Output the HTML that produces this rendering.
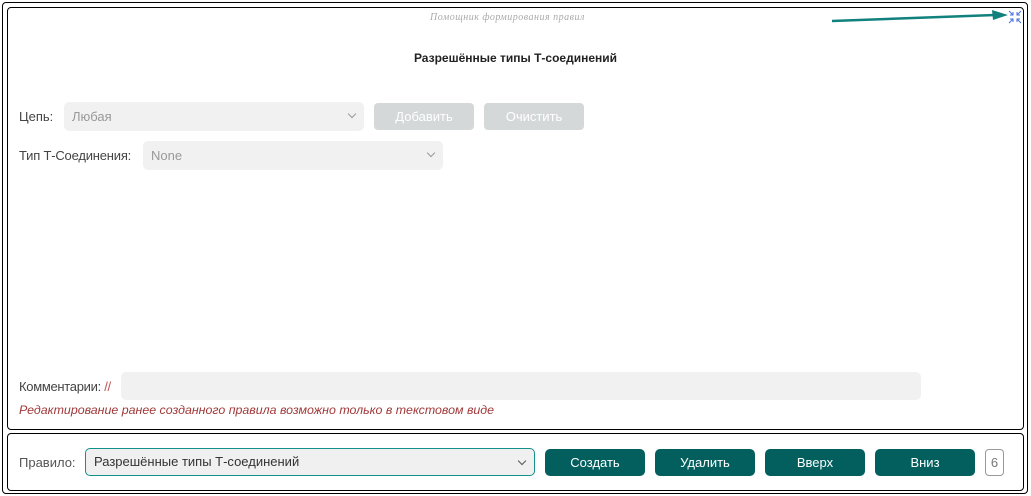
<!DOCTYPE html>
<html><head><meta charset="utf-8"><style>
body{margin:0;width:1031px;height:496px;background:#fff;font-family:"Liberation Sans",sans-serif;position:relative;overflow:hidden;color:#333}
.outer{position:absolute;left:2px;top:2px;width:1024px;height:490px;border:1px solid #000;border-radius:4px}
.p1{position:absolute;left:7px;top:7px;width:1015px;height:421px;border:1.5px solid #000;border-radius:4px}
.p2{position:absolute;left:7px;top:433px;width:1015px;height:56px;border:1.5px solid #000;border-radius:4px}
.a{position:absolute;font-size:13px}
.sel{position:absolute;background:#f0f1f0;border-radius:5px;color:#999;font-size:13px;box-sizing:border-box;padding-left:8px}
.chev{position:absolute;right:9px;top:9px;width:5px;height:5px;border-right:1px solid #999;border-bottom:1px solid #999;transform:rotate(45deg)}
.gb{position:absolute;background:#d4d8d8;border-radius:4px;color:#fff;font-size:13px;text-align:center}
.db{position:absolute;background:#025f5e;border-radius:5px;color:#fff;font-size:13px;text-align:center;top:449px;width:100px;height:27px;line-height:27px}
</style></head><body>
<div class="outer"></div><div class="p1"></div><div class="p2"></div>
<div class="a" style="left:430px;top:12px;font-family:'Liberation Serif',serif;font-style:italic;font-size:10px;color:#aaa;letter-spacing:0.5px">Помощник формирования правил</div>
<svg style="position:absolute;left:830px;top:8px" width="200" height="20"><line x1="2" y1="13" x2="165" y2="7" stroke="#11817d" stroke-width="2.5"/><polygon points="178,7 162,2 163,12" fill="#11817d"/>
<g stroke="#4a6ee0" stroke-width="1" fill="none"><path d="M179 3l4 4M183 4v3h-3M191 3l-4 4M187 4v3h3M179 15l4-4M183 14v-3h-3M191 15l-4-4M187 14v-3h3"/></g></svg>
<div class="a" style="left:0;width:1031px;text-align:center;top:51px;font-weight:bold;font-size:12px;color:#222">Разрешённые типы Т-соединений</div>
<div class="a" style="left:19px;top:109px;color:#444">Цепь:</div>
<div class="sel" style="left:64px;top:102px;width:300px;height:29px;line-height:29px">Любая<div class="chev"></div></div>
<div class="gb" style="left:374px;top:103px;width:100px;height:27px;line-height:27px">Добавить</div>
<div class="gb" style="left:484px;top:103px;width:100px;height:27px;line-height:27px">Очистить</div>
<div class="a" style="left:19px;top:148px;color:#444;letter-spacing:-0.2px">Тип Т-Соединения:</div>
<div class="sel" style="left:143px;top:141px;width:300px;height:29px;line-height:29px">None<div class="chev"></div></div>
<div class="a" style="left:19px;top:379px;color:#444;letter-spacing:-0.3px">Комментарии: <span style="color:#c05050">//</span></div>
<div class="sel" style="left:121px;top:372px;width:800px;height:28px"></div>
<div class="a" style="left:19px;top:403px;font-style:italic;color:#a03838;font-size:12.4px">Редактирование ранее созданного правила возможно только в текстовом виде</div>
<div class="a" style="left:19px;top:455px;color:#555">Правило:</div>
<div class="sel" style="left:85px;top:448px;width:450px;height:28px;line-height:26px;border:1px solid #12908a;color:#333;background:#eff0ef">Разрешённые типы Т-соединений<div class="chev" style="border-color:#555"></div></div>
<div class="db" style="left:545px">Создать</div>
<div class="db" style="left:655px">Удалить</div>
<div class="db" style="left:765px">Вверх</div>
<div class="db" style="left:875px">Вниз</div>
<div class="a" style="left:985px;top:449px;width:17px;height:25px;line-height:25px;border:1px solid #999;border-radius:4px;text-align:center;color:#777">6</div>
</body></html>
